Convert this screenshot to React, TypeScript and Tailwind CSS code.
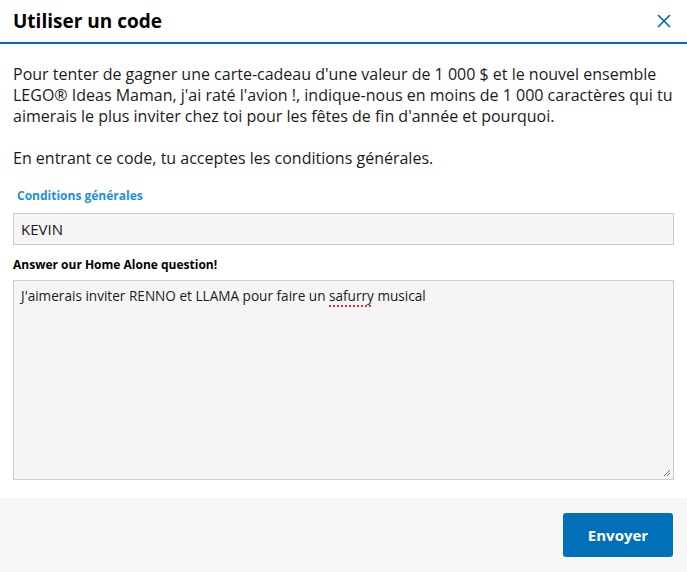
import { X } from "lucide-react"

const font = { fontFamily: '"Open Sans", "Liberation Sans", sans-serif' }

export default function App() {
  return (
    <div className="w-[687px] h-[572px] bg-white flex flex-col text-[#1b1b1b]" style={font}>
      <div className="h-[44px] flex items-center justify-between pl-[13px] pr-[12px] border-b-2 border-[#0b63c1]">
        <h2 className="text-[19px] font-bold text-black">Utiliser un code</h2>
        <X className="w-[22px] h-[22px] text-[#0b63c1]" strokeWidth={1.75} />
      </div>

      <div className="flex-1 px-[13px] pt-[20px]">
        <p className="text-[16px] leading-[21px]">
          Pour tenter de gagner une carte-cadeau d'une valeur de 1 000 $ et le nouvel ensemble LEGO® Ideas Maman, j'ai raté l'avion !, indique-nous en moins de 1 000 caractères qui tu aimerais le plus inviter chez toi pour les fêtes de fin d'année et pourquoi.
        </p>
        <p className="text-[16px] leading-[21px] mt-[21px]">
          En entrant ce code, tu acceptes les conditions générales.
        </p>

        <a className="block mt-[18px] ml-[4px] text-[12px] font-bold text-[#1e8fe0]">
          Conditions générales
        </a>

        <div className="mt-[8px] h-[32px] bg-[#f5f5f5] border border-[#cccccc] flex items-center px-[7px] text-[15px]">
          KEVIN
        </div>

        <div className="mt-[11px] text-[12px] font-bold text-black">Answer our Home Alone question!</div>

        <div className="relative mt-[6px] h-[200px] bg-[#f5f5f5] border border-[#cccccc] px-[7px] pt-[4px] text-[13.6px] leading-[21px]">
          J'aimerais inviter RENNO et LLAMA pour faire un{" "}
          <span className="underline decoration-dotted decoration-[#e0303a] decoration-2 underline-offset-[4px]">safurry</span>{" "}
          musical
          <svg className="absolute right-[2px] bottom-[2px]" width="9" height="9" viewBox="0 0 9 9">
            <path d="M8 2 L2 8 M8 5 L5 8" stroke="#7a7a7a" strokeWidth="1" />
          </svg>
        </div>
      </div>

      <div className="h-[74px] bg-[#f7f7f7] flex items-center justify-end px-[14px]">
        <button className="w-[110px] h-[44px] bg-[#0070b9] rounded-[3px] text-white text-[15px] font-bold">
          Envoyer
        </button>
      </div>
    </div>
  )
}
